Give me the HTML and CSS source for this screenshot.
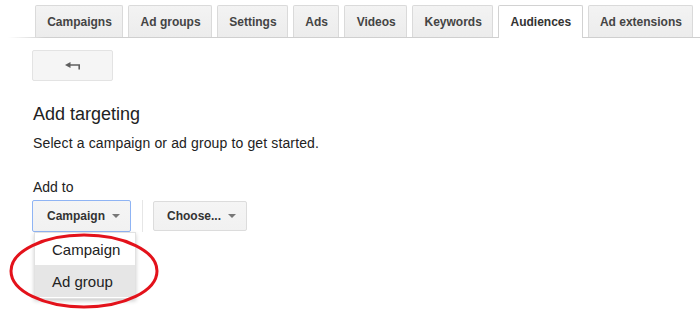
FILE: index.html
```html
<!DOCTYPE html>
<html lang="en">
<head>
<meta charset="utf-8">
<title>Audiences</title>
<link rel="stylesheet" href="styles.css">
</head>
<body>
<div class="page">
  <nav class="tabs">
    <div class="tab">Campaigns</div>
    <div class="tab">Ad groups</div>
    <div class="tab">Settings</div>
    <div class="tab">Ads</div>
    <div class="tab">Videos</div>
    <div class="tab">Keywords</div>
    <div class="tab active">Audiences</div>
    <div class="tab">Ad extensions</div>
  </nav>
  <main class="content">
    <button class="back-btn" type="button" aria-label="Back">
      <svg width="16" height="8" viewBox="0 0 16 8" aria-hidden="true">
        <path d="M0 3 L5.5 0 L5.5 2.2 L15 2.2 L15 7.5 L13.4 7.5 L13.4 3.8 L5.5 3.8 L5.5 6 Z" fill="#5f5f5f"/>
      </svg>
    </button>
    <h2 class="title">Add targeting</h2>
    <p class="desc">Select a campaign or ad group to get started.</p>
    <div class="label">Add to</div>
    <div class="controls">
      <div class="dd-wrap">
        <button class="dd focused" type="button">Campaign<span class="caret"></span></button>
        <ul class="menu">
          <li class="item">Campaign</li>
          <li class="item hover">Ad group</li>
        </ul>
      </div>
      <span class="sep"></span>
      <button class="dd" type="button">Choose...<span class="caret"></span></button>
    </div>
  </main>
  <svg class="annot" width="700" height="310" viewBox="0 0 700 310" aria-hidden="true">
    <ellipse cx="84" cy="271" rx="73" ry="36" fill="none" stroke="#e3121b" stroke-width="3"/>
  </svg>
</div>
</body>
</html>
```

FILE: styles.css
```css
* { box-sizing: border-box; }
html, body { margin: 0; padding: 0; background: #fff; }
body {
  font-family: Arial, "Liberation Sans", sans-serif;
  color: #222;
}
.page {
  position: relative;
  width: 700px;
  height: 310px;
  overflow: hidden;
}
.tabs {
  display: flex;
  gap: 5px;
  padding: 5px 0 0 35px;
  height: 38px;
  background: linear-gradient(to right, #fff 0, #fff 8px, #cfcfcf 45px, #cfcfcf 100%) left bottom / 100% 1px no-repeat;
  white-space: nowrap;
}
.tab {
  flex: none;
  height: 32px;
  padding: 0 10.5px 0 11.2px;
  display: flex;
  align-items: center;
  border: 1px solid #dadada;
  border-bottom: none;
  border-radius: 2px 2px 0 0;
  background: linear-gradient(#f3f3f3, #ececec);
  font-size: 12px;
  font-weight: bold;
  color: #444;
}
.tab.active {
  height: 33px;
  background: #fff;
  border-color: #d2d2d2;
  color: #333;
}
.content {
  padding: 12px 0 0 32px;
}
.back-btn {
  display: flex;
  align-items: center;
  justify-content: center;
  width: 81px;
  height: 31px;
  padding: 0;
  margin: 0;
  border: 1px solid #e3e3e3;
  border-radius: 2px;
  background: #f5f5f5;
}
.title {
  margin: 22px 0 0 1px;
  font-size: 18px;
  line-height: 22px;
  font-weight: normal;
  color: #222;
}
.desc {
  margin: 9px 0 0 1px;
  font-size: 14px;
  line-height: 18px;
  letter-spacing: 0.13px;
  color: #222;
}
.label {
  margin: 26px 0 0 1px;
  font-size: 14px;
  line-height: 18px;
  color: #222;
}
.controls {
  display: flex;
  align-items: flex-start;
  margin-top: 4px;
}
.dd-wrap {
  position: relative;
}
.dd {
  display: flex;
  align-items: center;
  height: 30px;
  margin: 1px 0 0;
  padding: 0 10px 0 13px;
  border: 1px solid #dcdcdc;
  border-radius: 2px;
  background: linear-gradient(#f5f5f5, #f1f1f1);
  font-family: Arial, "Liberation Sans", sans-serif;
  font-size: 12px;
  font-weight: bold;
  color: #333;
}
.dd.focused {
  height: 32px;
  margin-top: 0;
  width: 99px;
  padding-left: 14px;
  border-color: #8fb4f4;
}
.caret {
  display: inline-block;
  width: 0;
  height: 0;
  margin-left: 7px;
  border-left: 4px solid transparent;
  border-right: 4px solid transparent;
  border-top: 4px solid #777;
}
.sep {
  width: 1px;
  height: 32px;
  margin: 0 10px 0 11px;
  background: #e6e6e6;
}
.menu {
  position: absolute;
  top: 32px;
  left: 2px;
  width: 102px;
  margin: 0;
  padding: 1px 0;
  list-style: none;
  background: #fff;
  border: 1px solid #e2e2e2;
  box-shadow: 0 2px 4px rgba(0, 0, 0, 0.2);
}
.item {
  height: 31px;
  padding-left: 17px;
  display: flex;
  align-items: center;
  font-size: 15px;
  color: #222;
}
.item.hover {
  background: #e6e6e6;
  height: 32px;
}
.annot {
  position: absolute;
  left: 0;
  top: 0;
  pointer-events: none;
}
```
